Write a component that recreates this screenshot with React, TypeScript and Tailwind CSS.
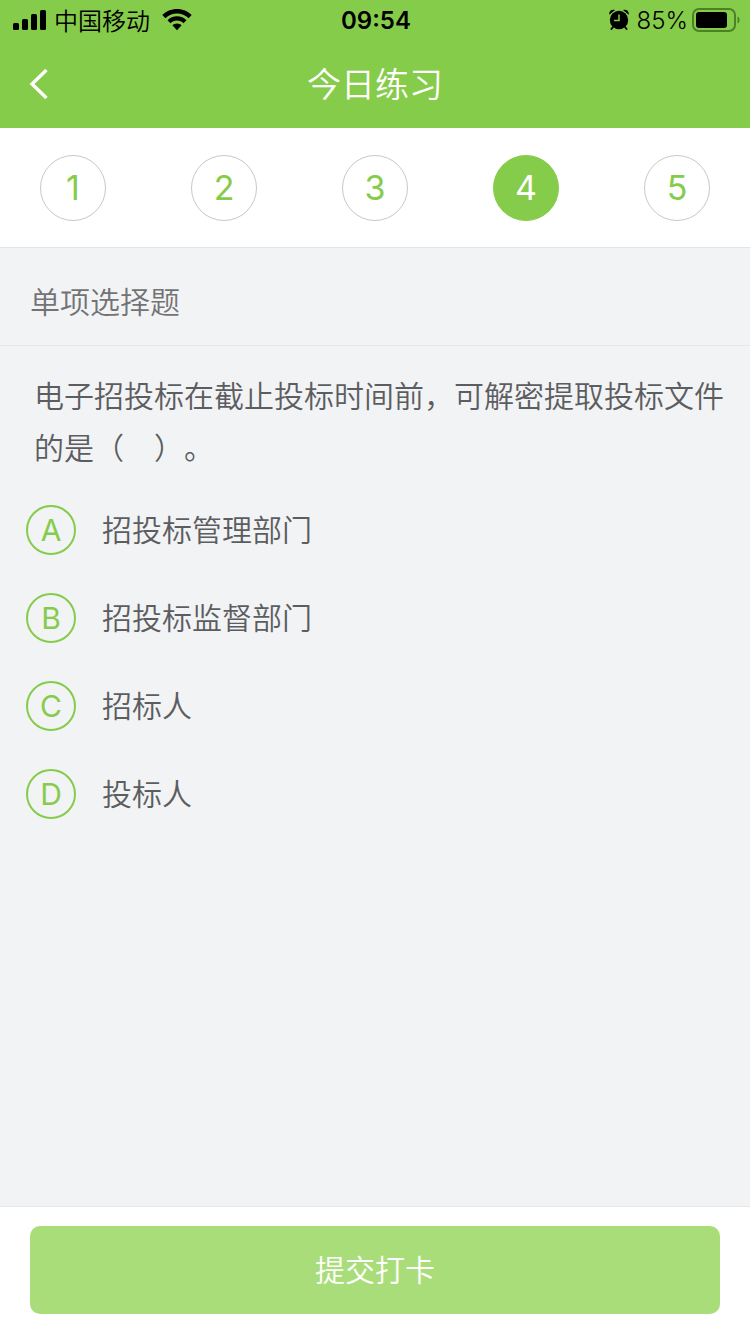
import { useState } from "react";

const steps = [1, 2, 3, 4, 5];

const options = [
  { key: "A", text: "招投标管理部门" },
  { key: "B", text: "招投标监督部门" },
  { key: "C", text: "招标人" },
  { key: "D", text: "投标人" },
];

function StatusBar() {
  return (
    <div className="grid h-10 grid-cols-[1fr_auto_1fr] items-center pl-3 pr-[10px] text-2xl leading-8 text-black">
      <div className="flex items-center gap-2">
        <svg className="h-[22px] w-[34px]" viewBox="0 0 34 22">
          <rect x="1" y="14" width="6" height="7" rx="1.5" />
          <rect x="10" y="10" width="6" height="11" rx="1.5" />
          <rect x="19" y="5" width="6" height="16" rx="1.5" />
          <rect x="28" y="1" width="6" height="20" rx="1.5" />
        </svg>
        <span className="pt-1">中国移动</span>
        <svg className="ml-1 h-[22px] w-[30px]" viewBox="0 0 30 22">
          <path d="M15 0C9.3 0 4 2.2 0.3 6L3.4 9.2C6.4 6.2 10.5 4.4 15 4.4S23.6 6.2 26.6 9.2L29.7 6C26 2.2 20.7 0 15 0Z" />
          <path d="M15 7.3C11.3 7.3 7.9 8.8 5.5 11.2L8.5 14.2C10.2 12.5 12.5 11.5 15 11.5S19.8 12.5 21.5 14.2L24.5 11.2C22.1 8.8 18.7 7.3 15 7.3Z" />
          <path d="M15 14.4C13.2 14.4 11.6 15.1 10.4 16.3L15 21.2L19.6 16.3C18.4 15.1 16.8 14.4 15 14.4Z" />
        </svg>
      </div>
      <span className="pt-0.5 font-semibold">09:54</span>
      <div className="flex items-center justify-end gap-1">
        <svg className="mr-1 h-[22px] w-5" viewBox="0 0 20 22">
          <circle cx="10" cy="11" r="9.2" />
          <path d="M0.3 5.8C-0.4 2.2 2.6 -0.1 6 1Z" />
          <path d="M19.7 5.8C20.4 2.2 17.4 -0.1 14 1Z" />
          <path d="M4 18L2.4 20M16 18L17.6 20" stroke="black" strokeWidth="2" strokeLinecap="round" />
          <path d="M10 5.5V11.5H5" fill="none" stroke="#86cc4b" strokeWidth="1.5" />
        </svg>
        <span className="pt-0.5">85%</span>
        <svg className="h-6 w-12" viewBox="0 0 48 24">
          <rect x="1" y="1" width="42" height="22" rx="6" fill="none" stroke="#4e8028" strokeWidth="2" />
          <rect x="4" y="4" width="31" height="16" rx="3" />
          <path d="M45.5 8.5C48.3 9.5 48.3 14.5 45.5 15.5Z" fill="#4e8028" />
        </svg>
      </div>
    </div>
  );
}

export default function App() {
  const [step, setStep] = useState(4);
  const [answer, setAnswer] = useState("");

  return (
    <div className="flex min-h-screen flex-col bg-[#f2f3f5] font-[Inter,'Noto_Sans_CJK_SC',sans-serif] font-[350]">
      <header className="bg-[#86cc4b]">
        <StatusBar />
        <div className="grid h-22 grid-cols-[1fr_auto_1fr] items-center px-7">
          <button aria-label="返回" className="flex h-11 w-11 items-center">
            <svg className="h-8 w-6" viewBox="0 0 24 32" fill="none" stroke="white" strokeWidth="3.4">
              <path d="M18.5 2L4 16L18.5 30" />
            </svg>
          </button>
          <h1 className="text-[34px] font-[350] text-white">今日练习</h1>
        </div>
      </header>

      <nav className="flex justify-between border-b border-[#e3e4e6] bg-white px-10 pt-[27px] pb-[26px]">
        {steps.map((n) => (
          <button
            key={n}
            onClick={() => setStep(n)}
            className={`h-[66px] w-[66px] rounded-full border text-[34px] leading-none font-normal ${
              n === step ? "border-[#86cc4b] bg-[#86cc4b] text-white" : "border-[#c8c8c8] text-[#86cc4b]"
            }`}
          >
            {n}
          </button>
        ))}
      </nav>

      <main className="flex-1">
        <h2 className="border-b border-[#e6e7e9] px-[30px] pt-[30px] pb-[18px] text-[30px] leading-[49px] font-[350] text-[#737375]">
          单项选择题
        </h2>
        <fieldset className="pt-6">
          <legend className="float-left w-full pr-6 pl-[34px] text-[30px] leading-[52px] text-[#5c5d60] [text-spacing-trim:space-all]">
            电子招投标在截止投标时间前，可解密提取投标文件的是（　）。
          </legend>
          <div className="clear-both flex flex-col gap-[38px] px-[26px] pt-[31px]">
            {options.map((o) => (
              <label key={o.key} className="flex cursor-pointer items-center gap-[26px]">
                <input
                  type="radio"
                  name="answer"
                  value={o.key}
                  checked={answer === o.key}
                  onChange={() => setAnswer(o.key)}
                  className="peer sr-only"
                />
                <span className="flex h-[50px] w-[50px] items-center justify-center rounded-full border-2 border-[#86cc4b] text-[30px] leading-none font-normal text-[#86cc4b] peer-checked:bg-[#86cc4b] peer-checked:text-white">
                  {o.key}
                </span>
                <span className="text-[30px] leading-[50px] text-[#5c5d60]">{o.text}</span>
              </label>
            ))}
          </div>
        </fieldset>
      </main>

      <footer className="border-t border-[#e6e7e9] bg-white px-[30px] pt-[19px] pb-5">
        <button className="h-22 w-full rounded-[10px] bg-[#a9dd7a] text-[30px] text-white">提交打卡</button>
      </footer>
    </div>
  );
}
